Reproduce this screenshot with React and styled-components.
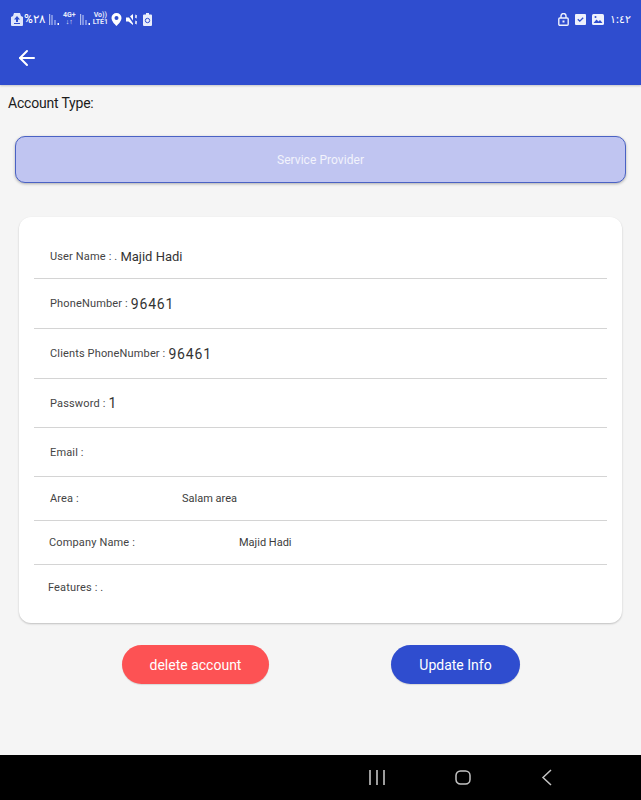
import React from 'react'
import styled, { createGlobalStyle } from 'styled-components'
import { ArrowLeft } from 'lucide-react'

const GlobalStyle = createGlobalStyle`
  html, body {
    margin: 0;
    padding: 0;
    background: #f5f5f5;
    font-family: Roboto, "Noto Sans", sans-serif;
  }
`

const Screen = styled.div`
  width: 641px;
  height: 800px;
  display: flex;
  flex-direction: column;
  overflow: hidden;
  background: #f5f5f5;
`

const Header = styled.header`
  height: 85px;
  flex: none;
  background: #2f4dcf;
  color: #fff;
  box-sizing: border-box;
  padding: 0 10px 0 11px;
  box-shadow: 0 1px 2px rgba(0, 0, 0, 0.2);
`

const StatusBar = styled.div`
  height: 38px;
  display: flex;
  align-items: center;
  justify-content: space-between;
`

const StatusGroup = styled.div`
  display: flex;
  align-items: center;
  gap: ${props => props.gap || 4}px;
`

const StatusText = styled.span`
  font-size: ${props => props.size || 10}px;
  font-weight: 500;
  line-height: 1;
`

const TinyStack = styled.span`
  display: flex;
  flex-direction: column;
  align-items: center;
  width: 13px;
  font-size: 7px;
  line-height: 7px;
  font-weight: 700;
  color: #e6eafa;
  white-space: nowrap;
`

const BackRow = styled.div`
  height: 40px;
  display: flex;
  align-items: center;
  padding-left: 4px;
`

const Main = styled.main`
  flex: 1;
  display: flex;
  flex-direction: column;
`

const AccountLabel = styled.div`
  font-size: 14px;
  line-height: 18px;
  letter-spacing: -0.2px;
  color: #1c1c1c;
  padding: 9px 0 0 8px;
`

const ProviderButton = styled.div`
  height: 47px;
  box-sizing: border-box;
  margin: 24px 15px 0;
  border: 1px solid #4a62c4;
  border-radius: 10px;
  background: #c0c5f1;
  color: #f2f3fc;
  font-size: 12px;
  letter-spacing: 0.05px;
  display: flex;
  align-items: center;
  justify-content: center;
  box-shadow: 0 1px 3px rgba(0, 0, 0, 0.3);
`

const Card = styled.section`
  height: 406px;
  box-sizing: border-box;
  margin: 34px 19px 0;
  padding: 0 15px;
  background: #fff;
  border-radius: 12px;
  box-shadow: 0 1px 2px rgba(0, 0, 0, 0.22);
`

const Row = styled.div`
  height: ${props => props.height}px;
  box-sizing: border-box;
  display: flex;
  align-items: center;
  padding-left: ${props => props.indent || 16}px;
  padding-top: ${props => props.top || 0}px;
  border-bottom: ${props => (props.last ? 'none' : '1px solid #d4d4d4')};
`

const Label = styled.span`
  font-size: 11px;
  letter-spacing: 0.15px;
  color: #444;
  white-space: pre;
  width: ${props => (props.width ? `${props.width}px` : 'auto')};
`

const Value = styled.span`
  font-size: ${props => props.size || 13}px;
  color: #333;
  margin-left: 3px;
  letter-spacing: ${props => (props.size === 14 ? '0.8px' : '0')};
`

const PlainValue = styled.span`
  font-size: 11px;
  color: #3c3c3c;
`

const Actions = styled.div`
  display: flex;
  margin: 22px 0 0 122px;
  gap: 122px;
`

const ActionButton = styled.button`
  width: ${props => props.width}px;
  height: 39px;
  border: none;
  border-radius: 20px;
  padding: 0;
  background: ${props => props.bg};
  color: #fff;
  font-family: inherit;
  font-size: 14px;
  box-shadow: 0 1px 1px rgba(0, 0, 0, 0.12);
`

const NavBar = styled.nav`
  height: 45px;
  flex: none;
  background: #000;
  display: flex;
  align-items: center;
  padding-left: 369px;
  gap: 70px;
`

const Icon = styled.svg`
  display: block;
  flex: none;
`

const DataIcon = () => (
  <Icon width="12" height="13" viewBox="0 0 12 13" fill="#dfe5fa">
    <path d="M3 0h6l1 3 2 1v8a1 1 0 0 1-1 1H1a1 1 0 0 1-1-1V4l2-1z" />
    <path d="M6 3l3 3.500H7V9H5V6.500H3zM3 10h6v1H3z" fill="#2f4dcf" />
  </Icon>
)

const SignalIcon = () => (
  <Icon width="10" height="11" viewBox="0 0 10 11" fill="#aebcf0">
    <rect x="0" y="0" width="1.200" height="11" />
    <rect x="2.400" y="1" width="1.200" height="10" />
    <rect x="5.400" y="6" width="1.200" height="5" />
    <rect x="8.500" y="9" width="1.500" height="2" fill="#fff" />
  </Icon>
)

const PinIcon = () => (
  <Icon width="11" height="13" viewBox="0 0 11 13" fill="#fff">
    <path fillRule="evenodd" d="M5.500 0a5 5 0 0 1 5 5c0 3-3 6-5 8-2-2-5-5-5-8a5 5 0 0 1 5-5zm0 3a2 2 0 1 0 0 4 2 2 0 0 0 0-4z" />
  </Icon>
)

const MuteIcon = () => (
  <Icon width="13" height="13" viewBox="0 0 13 13" fill="#fff">
    <path d="M0 4.500h2.500L7 1v11L2.500 8.500H0z" />
    <path d="M1 0l8 12" stroke="#2f4dcf" strokeWidth="1.500" />
    <path d="M9 2l2 1-2 1 2 1M9 8l2 1-2 1 2 1" stroke="#fff" strokeWidth="0.900" fill="none" />
  </Icon>
)

const BatteryIcon = () => (
  <Icon width="9" height="13" viewBox="0 0 9 13" fill="#e9edfb">
    <path d="M3 0h3v1.500h2a1 1 0 0 1 1 1V12a1 1 0 0 1-1 1H1a1 1 0 0 1-1-1V2.500a1 1 0 0 1 1-1h2z" />
    <circle cx="4.500" cy="7.500" r="2.200" fill="none" stroke="#2f4dcf" strokeWidth="1" />
  </Icon>
)

const LockIcon = () => (
  <Icon width="11" height="13" viewBox="0 0 11 13" fill="none" stroke="#eef1fc" strokeWidth="1.400">
    <rect x="0.800" y="5" width="9.400" height="7.200" rx="1" />
    <path d="M3 5V3a2.500 2.500 0 0 1 5 0v2" />
    <rect x="4.500" y="7.500" width="2" height="2" fill="#eef1fc" stroke="none" />
  </Icon>
)

const CheckIcon = () => (
  <Icon width="11" height="11" viewBox="0 0 11 11">
    <rect width="11" height="11" rx="1" fill="#eef1fc" />
    <path d="M2.800 5.200l2 2 3.400-3.400" fill="none" stroke="#2f4dcf" strokeWidth="1.300" />
  </Icon>
)

const PhotoIcon = () => (
  <Icon width="12" height="11" viewBox="0 0 12 11">
    <rect width="12" height="11" rx="1.500" fill="#eef1fc" />
    <path d="M1.500 9l3-3.500 2 2 1.500-1.500 2.500 3z" fill="#2f4dcf" />
    <circle cx="3.500" cy="3" r="1" fill="#2f4dcf" />
  </Icon>
)

const RecentsIcon = () => (
  <Icon width="16" height="15" viewBox="0 0 16 15" stroke="#c4c4c4" strokeWidth="1.600">
    <path d="M1 0v15M8 0v15M15 0v15" />
  </Icon>
)

const HomeIcon = () => (
  <Icon width="16" height="15" viewBox="0 0 16 15" fill="none" stroke="#c4c4c4" strokeWidth="1.500">
    <rect x="1" y="1" width="14" height="13" rx="4.500" />
  </Icon>
)

const BackIcon = () => (
  <Icon width="11" height="17" viewBox="0 0 11 17" fill="none" stroke="#c4c4c4" strokeWidth="1.500">
    <path d="M10 1L2 8.500l8 7.500" />
  </Icon>
)

const rows = [
  { height: 62, top: 17, label: 'User Name : .', value: 'Majid Hadi' },
  { height: 50, label: 'PhoneNumber :', value: '96461', size: 14 },
  { height: 50, label: 'Clients PhoneNumber :', value: '96461', size: 14 },
  { height: 49, label: 'Password :', value: '1', size: 14 },
  { height: 49, label: 'Email :' },
  { height: 44, label: 'Area :', plain: 'Salam area', labelWidth: 132 },
  { height: 44, label: 'Company Name :', plain: 'Majid Hadi', labelWidth: 190, indent: 15 },
  { height: 44, label: 'Features : .', indent: 14, last: true },
]

export default function App() {
  return (
    <Screen>
      <GlobalStyle />
      <Header>
        <StatusBar>
          <StatusGroup gap={4}>
            <StatusGroup gap={1}>
              <DataIcon />
              <StatusText size={12}>%٢٨</StatusText>
            </StatusGroup>
            <SignalIcon />
            <TinyStack>
              <span>4G+</span>
              <span>↓↑</span>
            </TinyStack>
            <SignalIcon />
            <TinyStack>
              <span>Vo))</span>
              <span>LTE1</span>
            </TinyStack>
            <PinIcon />
            <MuteIcon />
            <BatteryIcon />
          </StatusGroup>
          <StatusGroup gap={6}>
            <LockIcon />
            <CheckIcon />
            <PhotoIcon />
            <StatusText size={11}>١:٤٢</StatusText>
          </StatusGroup>
        </StatusBar>
        <BackRow>
          <ArrowLeft size={24} color="#fff" strokeWidth={2} />
        </BackRow>
      </Header>
      <Main>
        <AccountLabel>Account Type:</AccountLabel>
        <ProviderButton>Service Provider</ProviderButton>
        <Card>
          {rows.map(row => (
            <Row key={row.label} height={row.height} top={row.top} indent={row.indent} last={row.last}>
              <Label width={row.labelWidth}>{row.label}</Label>
              {row.value && <Value size={row.size}>{row.value}</Value>}
              {row.plain && <PlainValue>{row.plain}</PlainValue>}
            </Row>
          ))}
        </Card>
        <Actions>
          <ActionButton width={147} bg="#fd5254">delete account</ActionButton>
          <ActionButton width={129} bg="#2f4dcf">Update Info</ActionButton>
        </Actions>
      </Main>
      <NavBar>
        <RecentsIcon />
        <HomeIcon />
        <BackIcon />
      </NavBar>
    </Screen>
  )
}
